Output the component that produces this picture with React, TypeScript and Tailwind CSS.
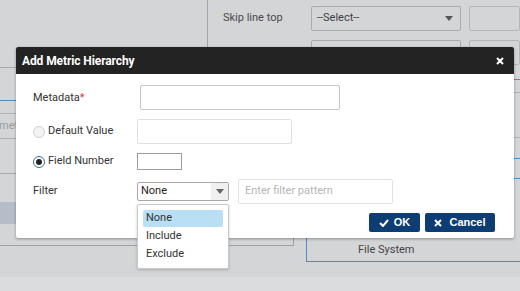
import React from 'react';

const font = { fontFamily: 'Roboto, "Liberation Sans", sans-serif' };

function Caret({ className = '' }: { className?: string }) {
  return (
    <svg width="8" height="5" viewBox="0 0 8 5" className={className}>
      <path d="M0 0h8L4 5z" fill="currentColor" />
    </svg>
  );
}

function Radio({ checked }: { checked?: boolean }) {
  return (
    <span
      className={`flex h-[12px] w-[12px] items-center justify-center rounded-full border ${
        checked ? 'border-[#3c6fa0] bg-white' : 'border-[#d0d0d0] bg-[#f3f3f3]'
      }`}
    >
      {checked && <span className="h-[6px] w-[6px] rounded-full bg-[#222]" />}
    </span>
  );
}

function Background() {
  return (
    <div className="flex h-full flex-col">
      <div className="flex h-[232px]">
        {/* left list panel */}
        <div className="flex w-[208px] flex-col border-r border-[#a2a4a7]">
          <div className="h-[68px] border-b border-[#a6a8ab]" />
          <div className="h-[33px] border-b border-[#4a8cc6]" />
          <div className="h-[13px] border-b border-[#b0b2b5]" />
          <div className="flex h-[25px] items-center border-b border-[#b0b2b5] text-[11px] text-[#9a9b9d] -ml-[1px]">met</div>
          <div className="h-[35px] border-b border-[#a6a8ab]" />
          <div className="h-[28px]" />
          <div className="h-[22px] bg-[#b4bdc8]" />
        </div>
        {/* right form panel */}
        <div className="flex flex-1 flex-col">
          <div className="mt-[6px] flex h-[25px] items-center">
            <span className="w-[103px] pl-[15px] text-[11px] text-[#4a4b4d]">Skip line top</span>
            <div className="flex h-[25px] w-[150px] items-center justify-between rounded-[2px] border border-[#a9abad] pl-[5px] pr-[7px] text-[11px] text-[#3e3f41]">
              --Select--
              <Caret className="text-[#555]" />
            </div>
            <div className="ml-[8px] h-[25px] flex-1 rounded-[2px] border border-[#b4b6b8]" />
          </div>
          <div className="mt-[9px] flex h-[25px] items-center pl-[103px]">
            <div className="h-[25px] w-[150px] rounded-[2px] border border-[#a9abad]" />
            <div className="ml-[8px] h-[25px] flex-1 rounded-[2px] border border-[#b4b6b8]" />
          </div>
          <div className="ml-auto mt-[14px] flex w-[20px] flex-col">
            <div className="h-[1px] bg-[#4a8cc6]" />
            <div className="mt-[12px] h-[1px] bg-[#b0b2b5]" />
            <div className="mt-[44px] h-[1px] bg-[#b0b2b5]" />
            <div className="mt-[20px] h-[1px] bg-[#4a8cc6]" />
            <div className="mt-[19px] h-[1px] bg-[#4a8cc6]" />
          </div>
        </div>
      </div>
      <div className="flex h-[45px]">
        <div className="h-[14px] w-[294px] border-b border-r border-[#9ea3a8]" />
        <div className="ml-[12px] flex h-[30px] flex-1 flex-col border-b border-l border-[#4a8cc6] pl-[51px] text-[11px] text-[#444]">
          <span className="-mt-[5px] leading-[13px]">Server</span>
          <span className="mt-[2px] leading-[15px]">File System</span>
        </div>
      </div>
      <div className="flex-1 bg-[#dbdcde]" />
    </div>
  );
}

export default function App() {
  return (
    <div className="relative h-[291px] w-[520px] overflow-hidden bg-[#d4d5d7]" style={font}>
      <Background />

      {/* modal */}
      <div className="absolute left-[16px] top-[47px] flex w-[498px] flex-col rounded-[2px] bg-white shadow-[0_1px_3px_rgba(0,0,0,0.35)]">
        <div className="flex h-[27px] items-center justify-between rounded-t-[2px] bg-[#232323] pl-[6px] pr-[10px]">
          <span className="text-[12px] font-bold tracking-[-0.1px] text-white">Add Metric Hierarchy</span>
          <svg width="8" height="8" viewBox="0 0 8 8">
            <path d="M1 1l6 6M7 1L1 7" stroke="white" strokeWidth="2" />
          </svg>
        </div>

        <div className="flex flex-col pb-[6px] pl-[17px] pr-[19px] text-[11px] text-[#333]">
          <div className="mt-[11px] flex h-[25px] items-center">
            <span className="w-[107px] pt-[1px]">
              Metadata<span className="text-[#e03a3a]">*</span>
            </span>
            <div className="h-[25px] w-[200px] rounded-[2px] border border-[#c6c6c6]" />
          </div>

          <div className="mt-[9px] flex h-[25px] items-center">
            <span className="flex w-[104px] items-center gap-[3px]">
              <Radio />
              Default Value
            </span>
            <div className="h-[25px] w-[155px] rounded-[2px] border border-[#e0e0e0]" />
          </div>

          <div className="mt-[9px] flex h-[17px] items-center">
            <span className="flex w-[104px] items-center gap-[3px]">
              <Radio checked />
              Field Number
            </span>
            <div className="h-[17px] w-[45px] border border-[#9c9c9c]" />
          </div>

          <div className="mt-[9px] flex h-[25px] items-center">
            <span className="w-[104px]">Filter</span>
            <div className="flex h-[19px] w-[92px] items-center justify-between rounded-[2px] border border-[#a8a8a8] pl-[3px] text-[#222]">
              None
              <span className="flex h-full w-[17px] items-center justify-center bg-[#f0f0f0]">
                <Caret className="text-[#666]" />
              </span>
            </div>
            <div className="ml-[9px] flex h-[25px] w-[155px] items-center rounded-[2px] border border-[#e2e2e2] pl-[6px] text-[#b5b5b5]">
              Enter filter pattern
            </div>
          </div>

          <div className="mt-[9px] flex h-[19px] justify-end gap-[5px]">
            <button className="flex h-[19px] w-[51px] items-center justify-center gap-[5px] rounded-[2px] bg-[#0e3d74] text-[11px] font-bold text-white" style={{ fontFamily: '"Liberation Sans", sans-serif' }}>
              <svg width="10" height="8" viewBox="0 0 10 8">
                <path d="M1 4l3 3 5-6" stroke="white" strokeWidth="2" fill="none" />
              </svg>
              OK
            </button>
            <button className="flex h-[19px] w-[70px] items-center justify-center gap-[7px] rounded-[2px] bg-[#0e3d74] text-[11px] font-bold text-white" style={{ fontFamily: '"Liberation Sans", sans-serif' }}>
              <svg width="8" height="8" viewBox="0 0 8 8">
                <path d="M1 1l6 6M7 1L1 7" stroke="white" strokeWidth="2" />
              </svg>
              Cancel
            </button>
          </div>
        </div>
      </div>

      {/* open filter dropdown */}
      <div className="absolute left-[137px] top-[204px] flex h-[65px] w-[92px] flex-col rounded-[2px] border border-[#c9c9c9] bg-white px-[5px] pt-[5px] text-[11px] text-[#333] shadow-[0_1px_3px_rgba(0,0,0,0.2)]">
        <div className="flex h-[17px] items-center rounded-[2px] bg-[#b9dff4] pl-[3px]">None</div>
        <div className="flex h-[18px] items-center pl-[3px]">Include</div>
        <div className="flex h-[18px] items-center pl-[3px]">Exclude</div>
      </div>
    </div>
  );
}
